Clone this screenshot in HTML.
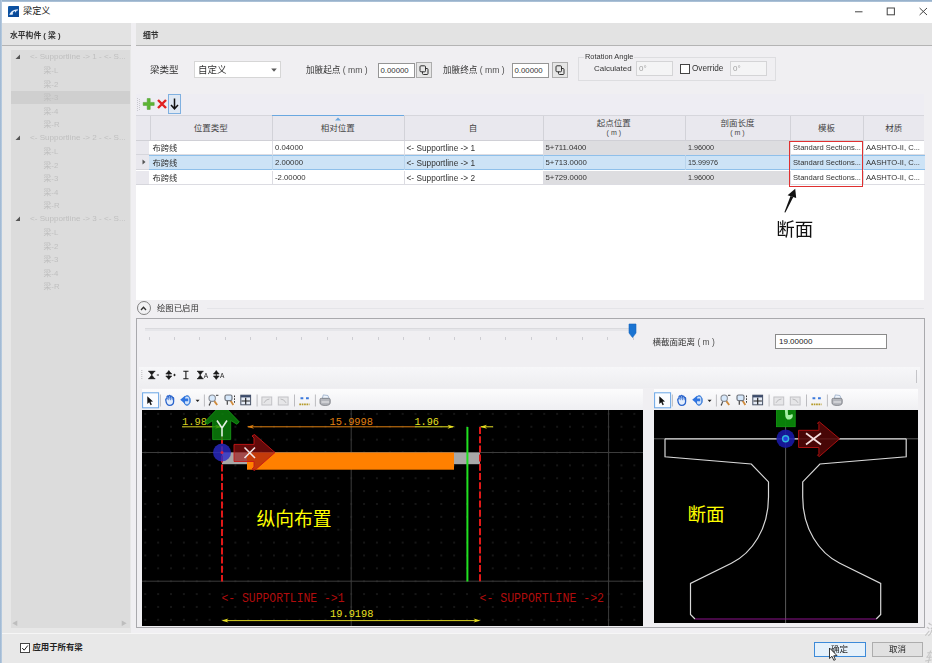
<!DOCTYPE html>
<html lang="zh">
<head>
<meta charset="utf-8">
<title>梁定义</title>
<style>
html,body{margin:0;padding:0;}
body{width:932px;height:663px;overflow:hidden;background:#f0eff2;font-family:"Liberation Sans","Noto Sans CJK SC",sans-serif;font-size:8px;color:#222;position:relative;}
.a{position:absolute;box-sizing:border-box;}
.t{position:absolute;white-space:nowrap;line-height:1;}
.b{font-weight:bold;}
#blur{position:absolute;left:0;top:0;width:932px;height:663px;filter:blur(0.6px);}
.tree{color:#bfbfbf;font-size:8.5px;}
.cell{font-size:7.6px;color:#333;}
.hd{font-size:8.5px;color:#444;}
</style>
</head>
<body>
<div id="blur">
<!-- window frame -->
<div class="a" style="left:0;top:0;width:932px;height:2px;background:linear-gradient(#8eaac6,#b4c8dc);"></div>
<div class="a" style="left:0;top:0;width:2px;height:663px;background:linear-gradient(90deg,#9ab4d0,#bccfe2);"></div>
<div class="a" style="left:2px;top:2px;width:930px;height:21px;background:#fff;"></div>
<!-- app icon -->
<svg class="a" style="left:7.600px;top:5.600px;" width="11.500" height="11.500" viewBox="0 0 12 12"><defs><linearGradient id="ig" x1="0" y1="0" x2="1" y2="1"><stop offset="0" stop-color="#0c56a8"/><stop offset="1" stop-color="#0a4694"/></linearGradient></defs><rect width="12" height="12" rx="1.200" fill="url(#ig)"/><path d="M1.300 9 C3 5.500 5.500 3.600 10.300 3.400 L10.300 4.800 L8.800 5 L8.300 6.600 L7.200 6.600 L7.500 5.200 C6 5.600 5.300 6.300 4.600 7.600 L5.400 7.600 L4.800 9 Z" fill="#e8f0fc"/></svg>
<div class="t" style="left:23px;top:7px;font-size:9.2px;color:#222;">梁定义</div>
<!-- window buttons -->
<svg class="a" style="left:850px;top:4px;" width="82" height="16" viewBox="0 0 82 16"><g stroke="#444" stroke-width="1" fill="none"><path d="M5 7.8 H12.5"/><rect x="37.2" y="4" width="7.2" height="6.8"/><path d="M69.6 4 L77 11 M77 4 L69.6 11"/></g></svg>

<!-- left panel header -->
<div class="a" style="left:2px;top:23px;width:129px;height:23px;background:#e3e3e3;border-bottom:1px solid #b4b4b4;"></div>
<div class="t b" style="left:10px;top:31.800px;font-size:7.8px;color:#333;">水平构件 ( 梁 )</div>
<!-- tree -->
<div class="a" style="left:2px;top:46px;width:129px;height:589px;background:#e7e7e7;"></div>
<div class="a" style="left:11px;top:50px;width:119px;height:578px;background:#dcdcdc;"></div>
<div class="a" style="left:11px;top:91px;width:119px;height:13px;background:#cfcfcf;"></div>
<svg class="a" style="left:15px;top:53.5px;" width="6" height="6" viewBox="0 0 6 6"><path d="M5 0.500 V5 H0.500 Z" fill="#555"/></svg>
<div class="t tree" style="left:30px;top:53.0px;font-size:8.070px;">&lt;- Supportline -&gt; 1 - &lt;- S...</div>
<div class="t tree" style="left:43.500px;top:67.0px;font-size:7.800px;">梁-L</div>
<div class="t tree" style="left:43.500px;top:80.5px;font-size:7.800px;">梁-2</div>
<div class="t tree" style="left:43.500px;top:94.0px;font-size:7.800px;">梁-3</div>
<div class="t tree" style="left:43.500px;top:107.5px;font-size:7.800px;">梁-4</div>
<div class="t tree" style="left:43.500px;top:121.0px;font-size:7.800px;">梁-R</div>
<svg class="a" style="left:15px;top:134.5px;" width="6" height="6" viewBox="0 0 6 6"><path d="M5 0.500 V5 H0.500 Z" fill="#555"/></svg>
<div class="t tree" style="left:30px;top:134.0px;font-size:8.070px;">&lt;- Supportline -&gt; 2 - &lt;- S...</div>
<div class="t tree" style="left:43.500px;top:148.0px;font-size:7.800px;">梁-L</div>
<div class="t tree" style="left:43.500px;top:161.5px;font-size:7.800px;">梁-2</div>
<div class="t tree" style="left:43.500px;top:175.0px;font-size:7.800px;">梁-3</div>
<div class="t tree" style="left:43.500px;top:188.5px;font-size:7.800px;">梁-4</div>
<div class="t tree" style="left:43.500px;top:202.0px;font-size:7.800px;">梁-R</div>
<svg class="a" style="left:15px;top:215.5px;" width="6" height="6" viewBox="0 0 6 6"><path d="M5 0.500 V5 H0.500 Z" fill="#555"/></svg>
<div class="t tree" style="left:30px;top:215.0px;font-size:8.070px;">&lt;- Supportline -&gt; 3 - &lt;- S...</div>
<div class="t tree" style="left:43.500px;top:229.0px;font-size:7.800px;">梁-L</div>
<div class="t tree" style="left:43.500px;top:242.5px;font-size:7.800px;">梁-2</div>
<div class="t tree" style="left:43.500px;top:256.0px;font-size:7.800px;">梁-3</div>
<div class="t tree" style="left:43.500px;top:269.5px;font-size:7.800px;">梁-4</div>
<div class="t tree" style="left:43.500px;top:283.0px;font-size:7.800px;">梁-R</div>
<!-- tree scrollbar arrows -->
<div class="t" style="left:12px;top:620px;font-size:6px;color:#bdbdbd;">◀</div>
<div class="t" style="left:121px;top:620px;font-size:6px;color:#bdbdbd;">▶</div>

<!-- right panel header -->
<div class="a" style="left:136px;top:23px;width:796px;height:23px;background:#e3e3e3;border-bottom:1px solid #b4b4b4;"></div>
<div class="t b" style="left:143px;top:31.800px;font-size:7.8px;color:#333;">细节</div>

<!-- form row -->
<div class="t" style="left:150px;top:65px;font-size:9.5px;color:#333;">梁类型</div>
<div class="a" style="left:194px;top:61px;width:87px;height:17px;background:#fff;border:1px solid #d6d6d6;"></div>
<div class="t" style="left:198px;top:65px;font-size:9.5px;color:#333;">自定义</div>
<svg class="a" style="left:270px;top:67px;" width="8" height="6" viewBox="0 0 8 6"><path d="M1.200 1.500 H6.800 L4 4.700 Z" fill="#5a5a5a"/></svg>
<div class="t" style="left:306px;top:65.500px;font-size:8.6px;color:#333;">加腋起点<span style="font-size:8.6px;color:#505050;"> ( mm )</span></div>
<div class="a" style="left:378px;top:63px;width:36.500px;height:15px;background:#fff;border:1px solid #959595;"></div>
<div class="t" style="left:380.500px;top:66.700px;font-size:7.8px;color:#333;">0.00000</div>
<div class="a" style="left:416px;top:62px;width:16px;height:16px;background:#e6e6e6;border:1px solid #adadad;"></div>
<svg class="a" style="left:419px;top:65px;" width="10" height="10" viewBox="0 0 10 10"><g fill="#e6e6e6" stroke="#333" stroke-width="1"><rect x="3.5" y="3.5" width="5.5" height="6" rx="1"/><rect x="1" y="0.8" width="5.5" height="6" rx="1"/></g></svg>
<div class="t" style="left:443px;top:65.500px;font-size:8.6px;color:#333;">加腋终点<span style="font-size:8.6px;color:#505050;"> ( mm )</span></div>
<div class="a" style="left:511.500px;top:63px;width:37px;height:15px;background:#fff;border:1px solid #959595;"></div>
<div class="t" style="left:514.500px;top:66.700px;font-size:7.8px;color:#333;">0.00000</div>
<div class="a" style="left:552px;top:62px;width:16px;height:16px;background:#e6e6e6;border:1px solid #adadad;"></div>
<svg class="a" style="left:555px;top:65px;" width="10" height="10" viewBox="0 0 10 10"><g fill="#e6e6e6" stroke="#333" stroke-width="1"><rect x="3.5" y="3.5" width="5.5" height="6" rx="1"/><rect x="1" y="0.8" width="5.5" height="6" rx="1"/></g></svg>
<!-- rotation group -->
<div class="a" style="left:578px;top:57px;width:198px;height:24px;border:1px solid #dddde0;"></div>
<div class="t" style="left:584px;top:53px;font-size:7.44px;color:#333;background:#f0eff2;padding:0 1px;">Rotation Angle</div>
<div class="t" style="left:594px;top:64.500px;font-size:7.96px;color:#333;">Calculated</div>
<div class="a" style="left:636px;top:61px;width:37px;height:15px;background:#f4f4f5;border:1px solid #d4d4d6;"></div>
<div class="t" style="left:639px;top:65px;font-size:8px;color:#a0a0a0;">0°</div>
<div class="a" style="left:680px;top:64px;width:10px;height:10px;background:#fff;border:1px solid #444;"></div>
<div class="t" style="left:692px;top:64.500px;font-size:8.19px;color:#333;">Override</div>
<div class="a" style="left:730px;top:61px;width:37px;height:15px;background:#f4f4f5;border:1px solid #d4d4d6;"></div>
<div class="t" style="left:733px;top:65px;font-size:8px;color:#a0a0a0;">0°</div>

<!-- table toolbar -->
<div class="a" style="left:136px;top:94px;width:788px;height:21px;background:#eeedf3;"></div>
<svg class="a" style="left:137px;top:98px;" width="5" height="14" viewBox="0 0 5 14"><g fill="#c9c9ce"><rect x="0" y="0" width="1" height="1"/><rect x="2" y="1" width="1" height="1"/><rect x="0" y="2" width="1" height="1"/><rect x="2" y="3" width="1" height="1"/><rect x="0" y="4" width="1" height="1"/><rect x="2" y="5" width="1" height="1"/><rect x="0" y="6" width="1" height="1"/><rect x="2" y="7" width="1" height="1"/><rect x="0" y="8" width="1" height="1"/><rect x="2" y="9" width="1" height="1"/><rect x="0" y="10" width="1" height="1"/><rect x="2" y="11" width="1" height="1"/><rect x="0" y="12" width="1" height="1"/></g></svg>
<svg class="a" style="left:142px;top:97px;" width="14" height="14" viewBox="0 0 14 14"><path d="M5.2 1.5 H8.2 V5.4 H12.2 V8.4 H8.2 V12.4 H5.2 V8.4 H1.2 V5.4 H5.2 Z" fill="#5cb533" stroke="#4a9a2a" stroke-width="0.5"/></svg>
<svg class="a" style="left:156px;top:98px;" width="12" height="12" viewBox="0 0 12 12"><path d="M2 2 L10 10 M10 2 L2 10" stroke="#e02020" stroke-width="2.4" fill="none"/></svg>
<div class="a" style="left:168px;top:94px;width:13px;height:20px;background:#dfe8f3;border:1px solid #7fb0e0;"></div>
<svg class="a" style="left:169px;top:97px;" width="11" height="14" viewBox="0 0 11 14"><path d="M5.5 1.5 V11.5 M2 8 L5.5 11.8 L9 8" stroke="#111" stroke-width="1.5" fill="none"/></svg>

<!-- table -->
<div class="a" style="left:136px;top:115px;width:788px;height:185px;background:#fff;"></div>
<div class="a" style="left:136px;top:115px;width:788px;height:26px;background:#e9e8ee;border-top:1px solid #d6d6dc;border-bottom:1px solid #d0d0d6;"></div>
<div class="a" style="left:149.5px;top:116px;width:1px;height:24px;background:#d2d2d8;"></div>
<div class="a" style="left:272.0px;top:116px;width:1px;height:24px;background:#d2d2d8;"></div>
<div class="a" style="left:403.5px;top:116px;width:1px;height:24px;background:#d2d2d8;"></div>
<div class="a" style="left:542.5px;top:116px;width:1px;height:24px;background:#d2d2d8;"></div>
<div class="a" style="left:685.0px;top:116px;width:1px;height:24px;background:#d2d2d8;"></div>
<div class="a" style="left:790.0px;top:116px;width:1px;height:24px;background:#d2d2d8;"></div>
<div class="a" style="left:863.0px;top:116px;width:1px;height:24px;background:#d2d2d8;"></div>
<div class="t hd" style="left:210.8px;top:124px;transform:translateX(-50%);">位置类型</div>
<div class="t hd" style="left:337.8px;top:124px;transform:translateX(-50%);">相对位置</div>
<div class="t hd" style="left:473.0px;top:124px;transform:translateX(-50%);">自</div>
<div class="t hd" style="left:613.8px;top:119px;transform:translateX(-50%);">起点位置</div>
<div class="t hd" style="left:613.8px;top:129px;transform:translateX(-50%);font-size:7px;">( m )</div>
<div class="t hd" style="left:737.5px;top:119px;transform:translateX(-50%);">剖面长度</div>
<div class="t hd" style="left:737.5px;top:129px;transform:translateX(-50%);font-size:7px;">( m )</div>
<div class="t hd" style="left:826.5px;top:124px;transform:translateX(-50%);">模板</div>
<div class="t hd" style="left:893.8px;top:124px;transform:translateX(-50%);">材质</div>
<div class="a" style="left:272px;top:115px;width:131.500px;height:1px;background:#6aa8e0;"></div>
<svg class="a" style="left:335px;top:117px;" width="6" height="4" viewBox="0 0 6 4"><path d="M0 3.500 L3 0.500 L6 3.500 Z" fill="#6aa8e0"/></svg>
<div class="a" style="left:136px;top:140.5px;width:13px;height:14.8px;background:#e9e8ee;border-bottom:1px solid #d6d6dc;"></div>
<div class="a" style="left:149px;top:140.5px;width:775.500px;height:14.8px;border-bottom:1px solid #dcdce2;"></div>
<div class="a" style="left:542.500px;top:140.5px;width:247.500px;height:13.8px;background:#dddde0;"></div>
<div class="a" style="left:272.0px;top:140.5px;width:1px;height:14.8px;background:#dcdce2;"></div>
<div class="a" style="left:403.5px;top:140.5px;width:1px;height:14.8px;background:#dcdce2;"></div>
<div class="a" style="left:542.5px;top:140.5px;width:1px;height:14.8px;background:#dcdce2;"></div>
<div class="a" style="left:685.0px;top:140.5px;width:1px;height:14.8px;background:#dcdce2;"></div>
<div class="a" style="left:790.0px;top:140.5px;width:1px;height:14.8px;background:#dcdce2;"></div>
<div class="a" style="left:863.0px;top:140.5px;width:1px;height:14.8px;background:#dcdce2;"></div>
<div class="t cell" style="left:152.5px;top:143.9px;font-size:8.300px;">布跨线</div>
<div class="t cell" style="left:275.0px;top:143.9px;font-size:7.750px;">0.04000</div>
<div class="t cell" style="left:406.5px;top:143.9px;font-size:8.290px;">&lt;- Supportline -&gt; 1</div>
<div class="t cell" style="left:545.5px;top:143.9px;font-size:7.800px;">5+711.0400</div>
<div class="t cell" style="left:688.0px;top:143.9px;font-size:7.200px;">1.96000</div>
<div class="t cell" style="left:793.0px;top:143.9px;font-size:7.550px;">Standard Sections...</div>
<div class="t cell" style="left:866.0px;top:143.9px;font-size:7.610px;">AASHTO-II, C...</div>
<div class="a" style="left:136px;top:155.3px;width:13px;height:15.2px;background:#e9e8ee;border-bottom:1px solid #d6d6dc;"></div>
<div class="a" style="left:149px;top:155.3px;width:775.500px;height:15.2px;background:#cde3f6;border-top:1px solid #8fc0ea;border-bottom:1px solid #8fc0ea;"></div>
<svg class="a" style="left:141.500px;top:159.3px;" width="4" height="6" viewBox="0 0 4 6"><path d="M0.500 0.500 L3.500 3 L0.500 5.500 Z" fill="#555"/></svg>
<div class="a" style="left:272.0px;top:155.3px;width:1px;height:15.2px;background:#b9d4ec;"></div>
<div class="a" style="left:403.5px;top:155.3px;width:1px;height:15.2px;background:#b9d4ec;"></div>
<div class="a" style="left:542.5px;top:155.3px;width:1px;height:15.2px;background:#b9d4ec;"></div>
<div class="a" style="left:685.0px;top:155.3px;width:1px;height:15.2px;background:#b9d4ec;"></div>
<div class="a" style="left:790.0px;top:155.3px;width:1px;height:15.2px;background:#b9d4ec;"></div>
<div class="a" style="left:863.0px;top:155.3px;width:1px;height:15.2px;background:#b9d4ec;"></div>
<div class="t cell" style="left:152.5px;top:158.9px;font-size:8.300px;">布跨线</div>
<div class="t cell" style="left:275.0px;top:158.9px;font-size:7.750px;">2.00000</div>
<div class="t cell" style="left:406.5px;top:158.9px;font-size:8.290px;">&lt;- Supportline -&gt; 1</div>
<div class="t cell" style="left:545.5px;top:158.9px;font-size:7.800px;">5+713.0000</div>
<div class="t cell" style="left:688.0px;top:158.9px;font-size:7.200px;">15.99976</div>
<div class="t cell" style="left:793.0px;top:158.9px;font-size:7.550px;">Standard Sections...</div>
<div class="t cell" style="left:866.0px;top:158.9px;font-size:7.610px;">AASHTO-II, C...</div>
<div class="a" style="left:136px;top:170.5px;width:13px;height:14.5px;background:#e9e8ee;border-bottom:1px solid #d6d6dc;"></div>
<div class="a" style="left:149px;top:170.5px;width:775.500px;height:14.5px;border-bottom:1px solid #dcdce2;"></div>
<div class="a" style="left:542.500px;top:170.5px;width:247.500px;height:13.5px;background:#dddde0;"></div>
<div class="a" style="left:272.0px;top:170.5px;width:1px;height:14.5px;background:#dcdce2;"></div>
<div class="a" style="left:403.5px;top:170.5px;width:1px;height:14.5px;background:#dcdce2;"></div>
<div class="a" style="left:542.5px;top:170.5px;width:1px;height:14.5px;background:#dcdce2;"></div>
<div class="a" style="left:685.0px;top:170.5px;width:1px;height:14.5px;background:#dcdce2;"></div>
<div class="a" style="left:790.0px;top:170.5px;width:1px;height:14.5px;background:#dcdce2;"></div>
<div class="a" style="left:863.0px;top:170.5px;width:1px;height:14.5px;background:#dcdce2;"></div>
<div class="t cell" style="left:152.5px;top:173.8px;font-size:8.300px;">布跨线</div>
<div class="t cell" style="left:275.0px;top:173.8px;font-size:7.750px;">-2.00000</div>
<div class="t cell" style="left:406.5px;top:173.8px;font-size:8.290px;">&lt;- Supportline -&gt; 2</div>
<div class="t cell" style="left:545.5px;top:173.8px;font-size:7.800px;">5+729.0000</div>
<div class="t cell" style="left:688.0px;top:173.8px;font-size:7.200px;">1.96000</div>
<div class="t cell" style="left:793.0px;top:173.8px;font-size:7.550px;">Standard Sections...</div>
<div class="t cell" style="left:866.0px;top:173.8px;font-size:7.610px;">AASHTO-II, C...</div>
<div class="a" style="left:789px;top:140.500px;width:74px;height:46px;border:1px solid #e03030;"></div>

<!-- arrow + annotation -->
<svg class="a" style="left:780px;top:186px;" width="30" height="30" viewBox="0 0 30 30"><path d="M5.400 26.600 L4.400 26.200 L10.500 9.900 L13.300 11.100 Z" fill="#111"/><path d="M15.200 2.700 L7.600 9.300 L16.200 12 Z" fill="#111"/></svg>
<div class="t" style="left:776.300px;top:221px;font-size:18.5px;color:#111;">断面</div>

<!-- expander -->
<div class="a" style="left:136.500px;top:301px;width:14px;height:14px;border-radius:50%;border:1.200px solid #808080;background:#f2f2f4;"></div>
<svg class="a" style="left:140px;top:305.500px;" width="7" height="5" viewBox="0 0 7 5"><path d="M1 4 L3.5 1.3 L6 4" stroke="#333" stroke-width="1.3" fill="none"/></svg>
<div class="t" style="left:157px;top:304px;font-size:8.4px;color:#333;">绘图已启用</div>
<div class="a" style="left:207px;top:308px;width:717px;height:1px;background:#e4e4e8;"></div>

<!-- drawing group -->
<div class="a" style="left:136px;top:318px;width:789px;height:310px;border:1px solid #a9a9ad;background:#f0eff2;"></div>
<div class="a" style="left:145px;top:328px;width:488px;height:3px;background:#e6e6ea;border-top:1px solid #dadade;"></div>
<div class="a" style="left:148.5px;top:337.300px;width:1px;height:2.500px;background:#cdcdd2;"></div>
<div class="a" style="left:174.0px;top:337.300px;width:1px;height:2.500px;background:#cdcdd2;"></div>
<div class="a" style="left:199.4px;top:337.300px;width:1px;height:2.500px;background:#cdcdd2;"></div>
<div class="a" style="left:224.9px;top:337.300px;width:1px;height:2.500px;background:#cdcdd2;"></div>
<div class="a" style="left:250.4px;top:337.300px;width:1px;height:2.500px;background:#cdcdd2;"></div>
<div class="a" style="left:275.9px;top:337.300px;width:1px;height:2.500px;background:#cdcdd2;"></div>
<div class="a" style="left:301.3px;top:337.300px;width:1px;height:2.500px;background:#cdcdd2;"></div>
<div class="a" style="left:326.8px;top:337.300px;width:1px;height:2.500px;background:#cdcdd2;"></div>
<div class="a" style="left:352.3px;top:337.300px;width:1px;height:2.500px;background:#cdcdd2;"></div>
<div class="a" style="left:377.8px;top:337.300px;width:1px;height:2.500px;background:#cdcdd2;"></div>
<div class="a" style="left:403.2px;top:337.300px;width:1px;height:2.500px;background:#cdcdd2;"></div>
<div class="a" style="left:428.7px;top:337.300px;width:1px;height:2.500px;background:#cdcdd2;"></div>
<div class="a" style="left:454.2px;top:337.300px;width:1px;height:2.500px;background:#cdcdd2;"></div>
<div class="a" style="left:479.7px;top:337.300px;width:1px;height:2.500px;background:#cdcdd2;"></div>
<div class="a" style="left:505.1px;top:337.300px;width:1px;height:2.500px;background:#cdcdd2;"></div>
<div class="a" style="left:530.6px;top:337.300px;width:1px;height:2.500px;background:#cdcdd2;"></div>
<div class="a" style="left:556.1px;top:337.300px;width:1px;height:2.500px;background:#cdcdd2;"></div>
<div class="a" style="left:581.6px;top:337.300px;width:1px;height:2.500px;background:#cdcdd2;"></div>
<div class="a" style="left:607.0px;top:337.300px;width:1px;height:2.500px;background:#cdcdd2;"></div>
<div class="a" style="left:632.5px;top:337.300px;width:1px;height:2.500px;background:#cdcdd2;"></div>
<svg class="a" style="left:628.200px;top:322.500px;" width="10" height="16" viewBox="0 0 10 16"><path d="M1 1 H8 V10 L4.5 14.5 L1 10 Z" fill="#1a73d2" stroke="#1766bd" stroke-width="0.6"/></svg>
<div class="t" style="left:652.500px;top:337.500px;font-size:8.5px;color:#333;">横截面距离<span style="color:#505050;"> ( m )</span></div>
<div class="a" style="left:775px;top:334px;width:112px;height:15px;background:#fff;border:1px solid #8a8a8a;"></div>
<div class="t" style="left:779px;top:338px;font-size:8px;color:#222;">19.00000</div>

<!-- small toolbar strip -->
<div class="a" style="left:139px;top:367px;width:781px;height:21px;background:linear-gradient(#f7f7f9,#ededf0);"></div>
<div class="a" style="left:916px;top:370px;width:1px;height:13px;background:#c4c4c8;"></div>
<svg class="a" style="left:140px;top:367px;" width="90" height="18" viewBox="140 367 90 18">
<g fill="#bdbdc0"><rect x="141.300" y="370" width="1" height="1"/><rect x="141.300" y="372" width="1" height="1"/><rect x="141.300" y="374" width="1" height="1"/><rect x="141.300" y="376" width="1" height="1"/><rect x="141.300" y="378" width="1" height="1"/></g>
<g stroke="#1a1a1a" stroke-width="0.900" fill="#1a1a1a">
<path d="M148.200 371.300 H155.300 M148.200 378.700 H155.300"/><path d="M149 371.500 H154.500 L151.750 375 Z M149 378.500 H154.500 L151.750 375 Z" stroke-width="0.600"/><path d="M156.800 375 H159"/>
<path d="M168.800 370.500 V379.500"/><path d="M165.800 374 L168.800 370.800 L171.800 374 Z M165.800 376 L168.800 379.200 L171.800 376 Z" stroke-width="0.600"/><path d="M173.300 375 H175.700 M174.500 373.800 V376.200"/>
<path d="M183.300 371.300 H188.500 M183.300 378.700 H188.500 M185.900 371.300 V378.700" stroke-width="1.100"/>
<path d="M197 371.300 H203.500 M197 378.700 H203.500"/><path d="M197.800 371.500 H202.700 L200.250 375 Z M197.800 378.500 H202.700 L200.250 375 Z" stroke-width="0.600"/>
<path d="M216.300 370.500 V379.500"/><path d="M213.400 374 L216.300 370.800 L219.200 374 Z M213.400 376 L216.300 379.200 L219.200 376 Z" stroke-width="0.600"/>
</g>
<text x="203.800" y="378" font-size="6.500" font-family="Liberation Sans, sans-serif" fill="#1a1a1a">A</text>
<text x="220" y="378" font-size="6.500" font-family="Liberation Sans, sans-serif" fill="#1a1a1a">A</text>
</svg>

<!-- left viewport -->
<div class="a" style="left:142px;top:389px;width:501px;height:21px;background:linear-gradient(#fcfcfd,#efeff2);"></div>
<div class="a" style="left:142px;top:410px;width:501px;height:216px;background:#000;"></div>
<!-- right viewport -->
<div class="a" style="left:654px;top:389px;width:264px;height:21px;background:linear-gradient(#fcfcfd,#efeff2);"></div>
<div class="a" style="left:654px;top:410px;width:264px;height:212.500px;background:#000;"></div>

<svg class="a" style="left:142px;top:389px;" width="200" height="21" viewBox="0 0 200 21">
<rect x="0.600" y="3.800" width="16" height="15" fill="#fafcff" stroke="#6aa6e6" stroke-width="1"/>
<path d="M5.300 7.200 V15 L7.200 13.300 L8.600 16.200 L9.900 15.600 L8.500 12.800 L11 12.600 Z" fill="#111"/>
<path d="M18.4 5.500 V17.500" stroke="#bcbcc0" stroke-width="1"/>
<path d="M62.4 5.500 V17.500" stroke="#bcbcc0" stroke-width="1"/>
<path d="M115.1 5.500 V17.500" stroke="#bcbcc0" stroke-width="1"/>
<path d="M152.5 5.500 V17.500" stroke="#bcbcc0" stroke-width="1"/>
<path d="M173.4 5.500 V17.500" stroke="#bcbcc0" stroke-width="1"/>
<path d="M23.800 11.200 q-0.200 -1.600 1.200 -1.500 v-2 q0.800 -1.400 1.700 0 v-0.600 q0.900 -1.300 1.800 0 v0.500 q0.900 -1.100 1.700 0.200 v0.900 q1.300 -0.600 1.400 0.900 v3 q0 3.800 -3.900 3.800 q-3.300 0 -3.900 -5.200 Z" fill="#e4eefc" stroke="#2a64cc" stroke-width="1.300"/>
<path d="M26.700 8 v3.200 M28.500 7.600 v3.600 M30.200 8.200 v3" stroke="#2a64cc" stroke-width="0.700"/>
<ellipse cx="45" cy="11.500" rx="3" ry="4.600" fill="#cfe2fb" stroke="#3a7ad6" stroke-width="1.200"/>
<path d="M38.200 10.800 L43 6.800 V9.400 H46.200 V12.200 H43 V14.800 Z" fill="#2f74e0"/>
<path d="M44.500 6.600 q3.800 0.300 3.700 5 q-0.200 4.300 -4 4.500" fill="none" stroke="#5590e0" stroke-width="1"/>
<path d="M53.600 10.700 h4 l-2 2.400 Z" fill="#222"/>
<path d="M72 11.600 L75.200 16" stroke="#d08a3a" stroke-width="1.800"/><path d="M69 11.800 L67.600 15.600" stroke="#555" stroke-width="1.200"/>
<circle cx="70.200" cy="9.200" r="3.200" fill="#d6e8fb" stroke="#8a8e96" stroke-width="1.100"/><path d="M74 6.300 h2.400" stroke="#222" stroke-width="0.900"/><rect x="66.800" y="15.300" width="1.200" height="1.200" fill="#222"/>
<path d="M88.500 11.600 L91.300 16" stroke="#d08a3a" stroke-width="1.800"/><path d="M85.300 11 V15.800" stroke="#444" stroke-width="1.200"/>
<rect x="83" y="6" width="7" height="5.600" rx="1.500" fill="#d6e8fb" stroke="#70757e" stroke-width="1.200"/><path d="M92.500 6.500 v8" stroke="#333" stroke-width="1" stroke-dasharray="1.600 1.200"/>
<rect x="98.800" y="6.200" width="9.800" height="9.600" fill="#e6ecf6" stroke="#4a5468" stroke-width="1"/><rect x="98.800" y="6.200" width="9.800" height="2.200" fill="#3a4a6a"/><path d="M103.700 8.800 v6.600 M99.500 12 h8.400" stroke="#222" stroke-width="1.200"/>
<rect x="119.900" y="8" width="9.800" height="8" fill="#e6e6e8" stroke="#c2c2c6" stroke-width="1"/><path d="M122 13.800 q2 -3.800 5.500 -3.800" stroke="#b4b4b8" fill="none" stroke-width="0.900"/>
<rect x="136.300" y="8" width="9.800" height="8" fill="#e6e6e8" stroke="#c2c2c6" stroke-width="1"/><path d="M138.500 10 q3.500 0 5.500 3.800" stroke="#b4b4b8" fill="none" stroke-width="0.900"/>
<path d="M158.500 9.300 h2.800 M164 9.300 h2.800" stroke="#3a78dc" stroke-width="2"/><path d="M157.300 15.400 h10.200" stroke="#b49a28" stroke-width="1.700" stroke-dasharray="1.700 0.700"/>
<path d="M180.300 9.500 l1 -3.600 l4.600 0.600 l1.300 3 Z" fill="#eef4fc" stroke="#8aa0c0" stroke-width="0.700"/><path d="M178 10.500 q0 -1.200 1.500 -1.200 h7 q1.700 0 1.700 1.500 v3 q0 2.600 -5 2.600 q-5.200 0 -5.200 -2.600 Z" fill="#b4b6bc" stroke="#74767c" stroke-width="0.800"/><path d="M179.500 13 h7.500" stroke="#ececee" stroke-width="1"/>
</svg>
<svg class="a" style="left:654px;top:389px;" width="200" height="21" viewBox="0 0 200 21">
<rect x="0.600" y="3.800" width="16" height="15" fill="#fafcff" stroke="#6aa6e6" stroke-width="1"/>
<path d="M5.300 7.200 V15 L7.200 13.300 L8.600 16.200 L9.900 15.600 L8.500 12.800 L11 12.600 Z" fill="#111"/>
<path d="M18.4 5.500 V17.500" stroke="#bcbcc0" stroke-width="1"/>
<path d="M62.4 5.500 V17.500" stroke="#bcbcc0" stroke-width="1"/>
<path d="M115.1 5.500 V17.500" stroke="#bcbcc0" stroke-width="1"/>
<path d="M152.5 5.500 V17.500" stroke="#bcbcc0" stroke-width="1"/>
<path d="M173.4 5.500 V17.500" stroke="#bcbcc0" stroke-width="1"/>
<path d="M23.800 11.200 q-0.200 -1.600 1.200 -1.500 v-2 q0.800 -1.400 1.700 0 v-0.600 q0.900 -1.300 1.800 0 v0.500 q0.900 -1.100 1.700 0.200 v0.900 q1.300 -0.600 1.400 0.900 v3 q0 3.800 -3.900 3.800 q-3.300 0 -3.900 -5.200 Z" fill="#e4eefc" stroke="#2a64cc" stroke-width="1.300"/>
<path d="M26.700 8 v3.200 M28.500 7.600 v3.600 M30.200 8.200 v3" stroke="#2a64cc" stroke-width="0.700"/>
<ellipse cx="45" cy="11.500" rx="3" ry="4.600" fill="#cfe2fb" stroke="#3a7ad6" stroke-width="1.200"/>
<path d="M38.200 10.800 L43 6.800 V9.400 H46.200 V12.200 H43 V14.800 Z" fill="#2f74e0"/>
<path d="M44.500 6.600 q3.800 0.300 3.700 5 q-0.200 4.300 -4 4.500" fill="none" stroke="#5590e0" stroke-width="1"/>
<path d="M53.600 10.700 h4 l-2 2.400 Z" fill="#222"/>
<path d="M72 11.600 L75.200 16" stroke="#d08a3a" stroke-width="1.800"/><path d="M69 11.800 L67.600 15.600" stroke="#555" stroke-width="1.200"/>
<circle cx="70.200" cy="9.200" r="3.200" fill="#d6e8fb" stroke="#8a8e96" stroke-width="1.100"/><path d="M74 6.300 h2.400" stroke="#222" stroke-width="0.900"/><rect x="66.800" y="15.300" width="1.200" height="1.200" fill="#222"/>
<path d="M88.500 11.600 L91.300 16" stroke="#d08a3a" stroke-width="1.800"/><path d="M85.300 11 V15.800" stroke="#444" stroke-width="1.200"/>
<rect x="83" y="6" width="7" height="5.600" rx="1.500" fill="#d6e8fb" stroke="#70757e" stroke-width="1.200"/><path d="M92.500 6.500 v8" stroke="#333" stroke-width="1" stroke-dasharray="1.600 1.200"/>
<rect x="98.800" y="6.200" width="9.800" height="9.600" fill="#e6ecf6" stroke="#4a5468" stroke-width="1"/><rect x="98.800" y="6.200" width="9.800" height="2.200" fill="#3a4a6a"/><path d="M103.700 8.800 v6.600 M99.500 12 h8.400" stroke="#222" stroke-width="1.200"/>
<rect x="119.900" y="8" width="9.800" height="8" fill="#e6e6e8" stroke="#c2c2c6" stroke-width="1"/><path d="M122 13.800 q2 -3.800 5.500 -3.800" stroke="#b4b4b8" fill="none" stroke-width="0.900"/>
<rect x="136.300" y="8" width="9.800" height="8" fill="#e6e6e8" stroke="#c2c2c6" stroke-width="1"/><path d="M138.500 10 q3.500 0 5.500 3.800" stroke="#b4b4b8" fill="none" stroke-width="0.900"/>
<path d="M158.500 9.300 h2.800 M164 9.300 h2.800" stroke="#3a78dc" stroke-width="2"/><path d="M157.300 15.400 h10.200" stroke="#b49a28" stroke-width="1.700" stroke-dasharray="1.700 0.700"/>
<path d="M180.300 9.500 l1 -3.600 l4.600 0.600 l1.300 3 Z" fill="#eef4fc" stroke="#8aa0c0" stroke-width="0.700"/><path d="M178 10.500 q0 -1.200 1.500 -1.200 h7 q1.700 0 1.700 1.500 v3 q0 2.600 -5 2.600 q-5.200 0 -5.200 -2.600 Z" fill="#b4b6bc" stroke="#74767c" stroke-width="0.800"/><path d="M179.500 13 h7.500" stroke="#ececee" stroke-width="1"/>
</svg>
<svg class="a" style="left:142px;top:410px;" width="501" height="216" viewBox="142 410 501 216">
<defs><pattern id="gd" x="222.500" y="452.500" width="12.870" height="12.870" patternUnits="userSpaceOnUse"><rect x="-0.500" y="-0.500" width="1" height="1" fill="#585858"/><rect x="12.370" y="-0.500" width="1" height="1" fill="#585858"/><rect x="-0.500" y="12.370" width="1" height="1" fill="#585858"/><rect x="12.370" y="12.370" width="1" height="1" fill="#585858"/></pattern></defs>
<rect x="142" y="410" width="504" height="216" fill="#000"/>
<rect x="142" y="410" width="504" height="216" fill="url(#gd)"/>
<path d="M351.2 410 V626" stroke="#3c3c3c" stroke-width="1"/>
<path d="M608.6 410 V626" stroke="#3c3c3c" stroke-width="1"/>
<path d="M142 452.5 H646" stroke="#3c3c3c" stroke-width="1"/>
<path d="M142 581.2 H646" stroke="#3c3c3c" stroke-width="1"/>
<rect x="222" y="452.500" width="258" height="11.700" fill="#a8a8a8"/>
<rect x="247" y="452.500" width="207" height="17.200" fill="#ff8000"/>
<path d="M467.400 427 V581.500" stroke="#20e020" stroke-width="2"/>
<path d="M222 437 V581.500" stroke="#e01818" stroke-width="2" stroke-dasharray="7 2.200"/>
<path d="M480 427 V581.500" stroke="#e01818" stroke-width="2" stroke-dasharray="7 2.200"/>
<g font-family="Liberation Mono, monospace" font-size="10.500px">
<path d="M182 426.800 H221" stroke="#d8d020" stroke-width="1"/><path d="M222 426.800 l-7 -2 l2 2 l-2 2 Z" fill="#d8d020"/>
<text x="182" y="424.500" fill="#d8d020" textLength="25" lengthAdjust="spacingAndGlyphs">1.98</text>
<path d="M248 426.800 H415" stroke="#e08010" stroke-width="1"/><path d="M247 426.800 l7 -2 l-2 2 l2 2 Z" fill="#e08010"/>
<text x="329.500" y="424.500" fill="#e08010" textLength="43.500" lengthAdjust="spacingAndGlyphs">15.9998</text>
<path d="M415 426.800 H453" stroke="#e8e020" stroke-width="1"/><path d="M454.500 426.800 l-7 -2 l2 2 l-2 2 Z" fill="#e8e020"/>
<text x="414.500" y="424.500" fill="#e8e020" textLength="24.500" lengthAdjust="spacingAndGlyphs">1.96</text>
<path d="M481 426.800 H493" stroke="#e8e020" stroke-width="1"/><path d="M480 426.800 l7 -2 l-2 2 l2 2 Z" fill="#e8e020"/>
<path d="M223 620.600 H479" stroke="#d8d020" stroke-width="1"/><path d="M221.500 620.600 l7 -2 l-2 2 l2 2 Z" fill="#e8e020"/><path d="M480.500 620.600 l-7 -2 l2 2 l-2 2 Z" fill="#e8e020"/>
<text x="330" y="617.300" fill="#e8e020" textLength="43.500" lengthAdjust="spacingAndGlyphs">19.9198</text>
<text x="221.500" y="601.700" fill="#b00c0c" font-size="12px" textLength="123" lengthAdjust="spacingAndGlyphs">&lt;- SUPPORTLINE -&gt;1</text>
<text x="479.500" y="601.700" fill="#b00c0c" font-size="12px" textLength="124.500" lengthAdjust="spacingAndGlyphs">&lt;- SUPPORTLINE -&gt;2</text>
</g>
<path d="M212.700 439.600 V420.500 L207 424.300 L204.800 421.800 L222 404 L239.200 421.800 L237 424.300 L230.700 420.500 V439.600 Z" fill="#0c8a0c" fill-opacity="0.780" stroke="#18a018" stroke-width="0.800"/>
<path d="M217 420.500 L222 428 L227 420.500 M222 428 V436.500" stroke="#e4f0e4" stroke-width="1.600" fill="none"/>
<path d="M234 444.400 H254 V438 L252 436 L254.500 434.500 L275 452.500 L254.500 470.500 L252 469 L254 467 V461.500 H234 Z" fill="#a01010" fill-opacity="0.620" stroke="#c81616" stroke-width="0.900"/>
<path d="M244.500 447.500 L255 458 M255 447.500 L244.500 458" stroke="#f0e4e4" stroke-width="1.600" fill="none"/>
<circle cx="222" cy="452.500" r="9" fill="#2a2ac8" fill-opacity="0.800"/>
<circle cx="222" cy="452.500" r="1.500" fill="#d02040"/>
<text x="256.500" y="525.500" fill="#ffff00" font-size="18.800px" font-family="Liberation Sans, Noto Sans CJK SC, sans-serif">纵向布置</text>
</svg>
<svg class="a" style="left:654px;top:410px;" width="264" height="212.500" viewBox="654 410 264 212.500">
<rect x="654" y="410" width="264" height="214" fill="#000"/>
<path d="M654 438.800 H918 M785.600 410 V624" stroke="#5a5a5a" stroke-width="1"/>
<path d="M665.0 438.8 L665.0 456.8 L751.3 464.0 L768.5 481.9 L768.5 497.0 C768.500 529 752 553 731.400 563.300 L690.500 583.400 L690.500 614.500 L695 619" fill="none" stroke="#d8d8d8" stroke-width="1.200"/>
<path d="M906.2 438.8 L906.2 456.8 L819.9 464.0 L802.7 481.9 L802.7 497.0 C802.7 529 819.2 553 839.8 563.300 L880.7 583.400 L880.7 614.500 L876.2 619" fill="none" stroke="#d8d8d8" stroke-width="1.200"/>
<path d="M665 438.800 H906.2" stroke="#d8d8d8" stroke-width="1.200"/>
<path d="M695 619 H876.2" stroke="#8c128c" stroke-width="1"/>
<rect x="776.600" y="406" width="18.600" height="20.700" fill="#0a860a" fill-opacity="0.950" stroke="#14a014" stroke-width="0.800"/>
<path d="M784.800 409 L785.400 416.500 Q786.500 421 791 419 Q793.800 417 792.300 414 Q790 415.300 788 414.800 L787.800 409 Z" fill="#a4f0a4"/>
<path d="M798.600 430.300 H818.900 V424.500 L817.500 423 L819.300 421.800 L839.600 438.800 L819.300 456.500 L817.500 455.300 L818.900 453.800 V447.500 H798.600 Z" fill="#4e0707" fill-opacity="0.920" stroke="#b81212" stroke-width="0.900"/>
<path d="M806 433.200 L821 444.500 M821 433.200 L806 444.500" stroke="#f4dede" stroke-width="1.700" fill="none"/>
<circle cx="785.600" cy="438.800" r="9.200" fill="#1818a4" fill-opacity="0.900"/>
<circle cx="785.600" cy="438.800" r="3" fill="#2040e0" stroke="#30b8d8" stroke-width="1.400"/>
<text x="687.500" y="520.500" fill="#ffff00" font-size="18.500px" font-family="Liberation Sans, Noto Sans CJK SC, sans-serif">断面</text>
</svg>
<!-- bottom bar -->
<div class="a" style="left:2px;top:633px;width:930px;height:30px;background:#e8e8e8;border-top:1px solid #f6f6f6;"></div>
<div class="t" style="left:924px;top:622px;font-size:15px;color:#c6c6c6;font-style:italic;">流</div>
<div class="t" style="left:924px;top:650px;font-size:15px;color:#c6c6c6;font-style:italic;">转</div>

<div class="a" style="left:20px;top:642.500px;width:10px;height:10px;background:#fff;border:1px solid #444;"></div>
<svg class="a" style="left:21px;top:643.500px;" width="8" height="8" viewBox="0 0 8 8"><path d="M1.2 4 L3.2 6.2 L6.8 1.5" stroke="#222" stroke-width="1" fill="none"/></svg>
<div class="t b" style="left:32.500px;top:643px;font-size:8.4px;color:#222;">应用于所有梁</div>
<div class="a" style="left:814px;top:642px;width:52px;height:15px;background:#e5f1fb;border:1px solid #3c8ad8;"></div>
<div class="t" style="left:831px;top:645px;font-size:8.5px;color:#222;">确定</div>
<div class="a" style="left:872px;top:642px;width:51px;height:15px;background:#e1e1e1;border:1px solid #adadad;"></div>
<div class="t" style="left:889px;top:645px;font-size:8.5px;color:#222;">取消</div>
<svg class="a" style="left:828px;top:647px;" width="11" height="15" viewBox="0 0 11 15"><path d="M1.500 1 V11.500 L4 9.300 L5.800 13.300 L7.400 12.600 L5.700 8.800 L9 8.600 Z" fill="#fff" stroke="#222" stroke-width="0.900"/></svg>
</div>
</body>
</html>
